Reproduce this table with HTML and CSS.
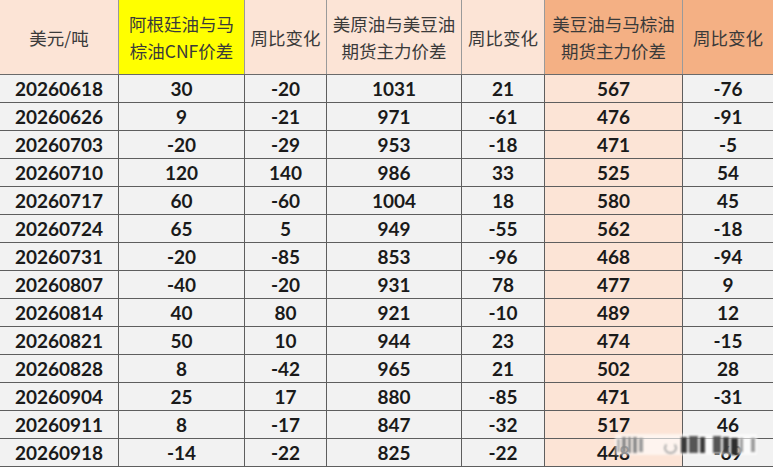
FILE: index.html
```html
<!DOCTYPE html>
<html lang="zh">
<head>
<meta charset="utf-8">
<link rel="stylesheet" href="styles.css">
</head>
<body>
<div class="sheet">
<table class="grid">
  <colgroup>
    <col class="c1"><col class="c2"><col class="c3"><col class="c4"><col class="c5"><col class="c6"><col class="c7">
  </colgroup>
  <thead>
    <tr>
      <th class="h-peach">美元/吨</th>
      <th class="h-yellow">阿根廷油与马<br>棕油CNF价差</th>
      <th class="h-peach">周比变化</th>
      <th class="h-peach">美原油与美豆油<br>期货主力价差</th>
      <th class="h-peach">周比变化</th>
      <th class="h-orange">美豆油与马棕油<br>期货主力价差</th>
      <th class="h-orange">周比变化</th>
    </tr>
  </thead>
  <tbody>
    <tr><td>20260618</td><td>30</td><td>-20</td><td>1031</td><td>21</td><td class="pk">567</td><td>-76</td></tr>
    <tr><td>20260626</td><td>9</td><td>-21</td><td>971</td><td>-61</td><td class="pk">476</td><td>-91</td></tr>
    <tr><td>20260703</td><td>-20</td><td>-29</td><td>953</td><td>-18</td><td class="pk">471</td><td>-5</td></tr>
    <tr><td>20260710</td><td>120</td><td>140</td><td>986</td><td>33</td><td class="pk">525</td><td>54</td></tr>
    <tr><td>20260717</td><td>60</td><td>-60</td><td>1004</td><td>18</td><td class="pk">580</td><td>45</td></tr>
    <tr><td>20260724</td><td>65</td><td>5</td><td>949</td><td>-55</td><td class="pk">562</td><td>-18</td></tr>
    <tr><td>20260731</td><td>-20</td><td>-85</td><td>853</td><td>-96</td><td class="pk">468</td><td>-94</td></tr>
    <tr><td>20260807</td><td>-40</td><td>-20</td><td>931</td><td>78</td><td class="pk">477</td><td>9</td></tr>
    <tr><td>20260814</td><td>40</td><td>80</td><td>921</td><td>-10</td><td class="pk">489</td><td>12</td></tr>
    <tr><td>20260821</td><td>50</td><td>10</td><td>944</td><td>23</td><td class="pk">474</td><td>-15</td></tr>
    <tr><td>20260828</td><td>8</td><td>-42</td><td>965</td><td>21</td><td class="pk">502</td><td>28</td></tr>
    <tr><td>20260904</td><td>25</td><td>17</td><td>880</td><td>-85</td><td class="pk">471</td><td>-31</td></tr>
    <tr><td>20260911</td><td>8</td><td>-17</td><td>847</td><td>-32</td><td class="pk">517</td><td>46</td></tr>
    <tr><td>20260918</td><td>-14</td><td>-22</td><td>825</td><td>-22</td><td class="pk">448</td><td>-69</td></tr>
  </tbody>
</table>
<div class="watermark" aria-hidden="true">
  <span class="wm b1"></span><span class="wm b2"></span><span class="wm b2"></span><span class="wm b2"></span><span class="wm b3"></span>
  <span class="wm gap"></span>
  <span class="wm ring"></span>
  <span class="wm b4"></span><span class="wm b5"></span><span class="wm b4"></span>
  <span class="wm gap2"></span>
  <span class="wm b5"></span><span class="wm b4"></span><span class="wm b6"></span><span class="wm b3"></span>
  <span class="wm gap2"></span>
  <span class="wm b3"></span>
</div>
</div>
</body>
</html>
```
FILE: styles.css
```css
html, body {
  margin: 0;
  padding: 0;
  background: #ffffff;
}
.sheet {
  position: relative;
  width: 773px;
  height: 468px;
  overflow: hidden;
}
.grid {
  border-collapse: collapse;
  table-layout: fixed;
  width: 774px;
  margin: -1px 0 0 -1px;
}
.c1 { width: 119px; }
.c2 { width: 126px; }
.c3 { width: 82px; }
.c4 { width: 135px; }
.c5 { width: 83px; }
.c6 { width: 138px; }
.c7 { width: 91px; }

.grid th {
  height: 74px;
  padding: 0;
  font-family: "Noto Sans CJK SC", "Noto Sans", sans-serif;
  font-weight: normal;
  font-size: 17.5px;
  line-height: 27px;
  color: #3a3a3a;
  text-align: center;
  vertical-align: middle;
  border: 1px solid #9a9a9a;
  border-bottom-color: #6a6a6a;
}
.h-peach { background: #fce4d6; }
.h-yellow { background: #ffff00; }
.h-orange { background: #f4b084; }

.grid td {
  height: 27px;
  padding: 0;
  font-family: "Lato", "Open Sans", sans-serif;
  font-weight: bold;
  font-size: 19px;
  color: #1a1a1a;
  text-align: center;
  vertical-align: middle;
  background: #f2f2f2;
  border: 1px solid #5e5e5e;
}
.grid td.pk { background: #fce4d6; }

.watermark {
  position: absolute;
  left: 615px;
  top: 434px;
  width: 142px;
  height: 21px;
  display: flex;
  align-items: stretch;
  gap: 2px;
  padding: 0 2px;
  box-sizing: border-box;
  background: rgba(255, 255, 255, 0.6);
  filter: blur(1.3px);
}
.wm { display: block; }
.b1 { width: 3px; background: #b0b0b0; margin: 5px 0 3px; }
.b2 { width: 4px; background: #8a8a8a; margin: 3px 0 2px; }
.b3 { width: 4px; background: #9a9a9a; margin: 4px 0 3px; }
.b4 { width: 6px; background: #3a3a3a; margin: 3px 0 2px; }
.b5 { width: 9px; background: #555555; margin: 2px 0 2px; }
.b6 { width: 7px; background: #2e2e2e; margin: 4px 0 0; }
.gap { width: 18px; }
.gap2 { width: 4px; }
.ring {
  width: 10px;
  margin: 8px 2px 1px 0;
  border: 2px solid #aaaaaa;
  border-top-color: transparent;
  border-radius: 50%;
}
```
